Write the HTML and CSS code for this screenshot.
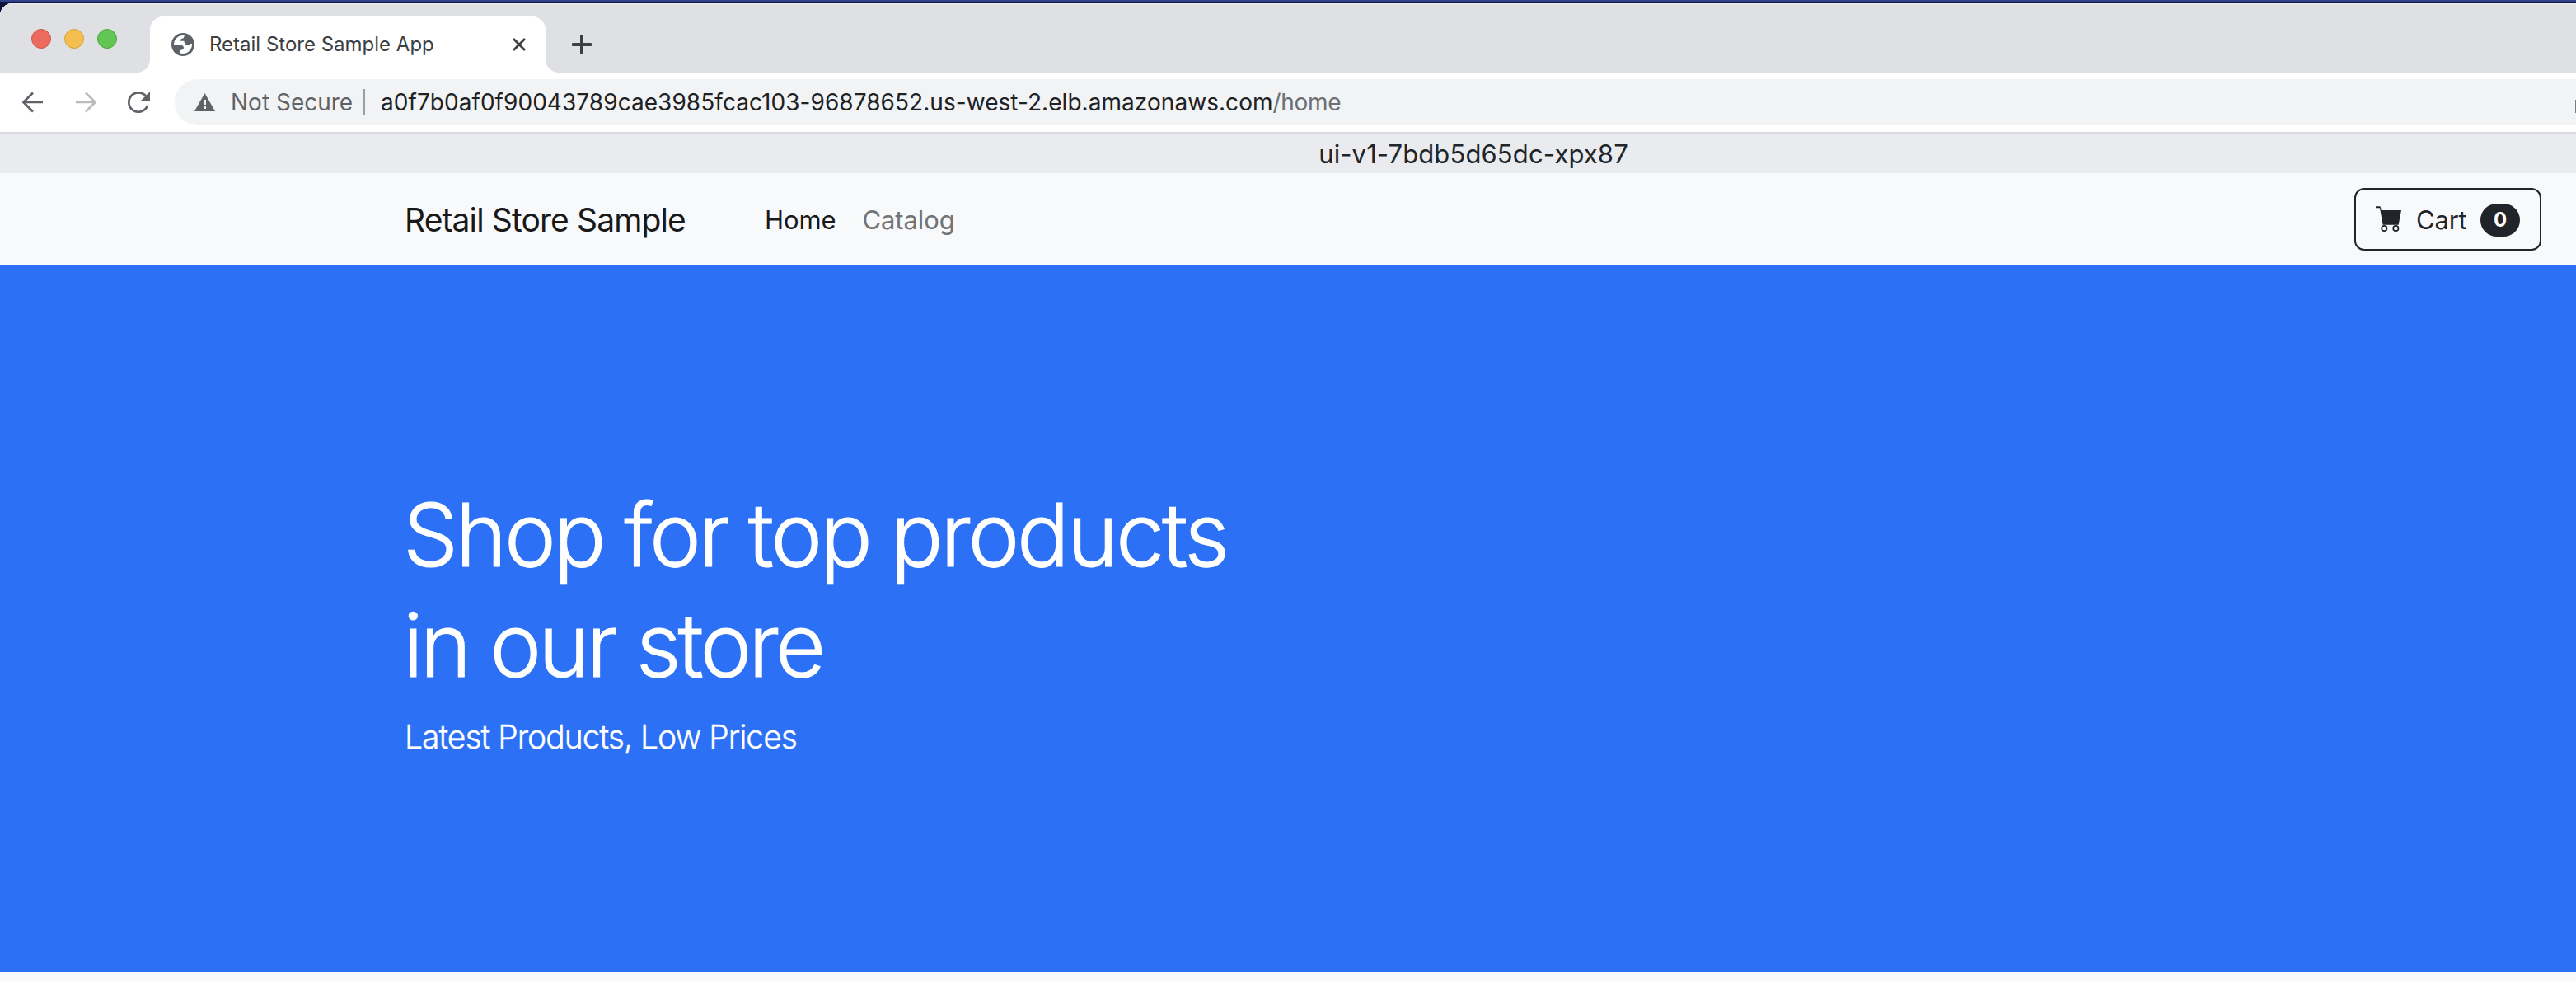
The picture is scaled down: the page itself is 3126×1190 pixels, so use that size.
FILE: index.html
```html
<!DOCTYPE html>
<html lang="en">
<head>
<meta charset="utf-8">
<title>Retail Store Sample App</title>
<link rel="stylesheet" href="styles.css">
</head>
<body>
<div class="window">
  <div class="tabstrip">
    <div class="strip-left">
      <span class="light red"></span>
      <span class="light yellow"></span>
      <span class="light green"></span>
    </div>
    <div class="tab-slot">
      <div class="tab">
        <svg class="globe" viewBox="624 120 84 84">
          <circle cx="666" cy="162" r="37.5" fill="#fff" stroke="#5f6368" stroke-width="9"/>
          <path fill="#5f6368" d="M630 162H650Q668 163 669 173Q669 182 657 182V198L638 192ZM673 127L668 139Q656 141 656 149H670Q672 164 685 164Q692 164 693 159H702V142Z"/>
        </svg>
        <span class="tab-title">Retail Store Sample App</span>
        <svg class="close" viewBox="0 0 16 16"><path d="M1 1L15 15M15 1L1 15"/></svg>
      </div>
    </div>
    <div class="strip-right">
      <svg class="plus" viewBox="0 0 24 24"><path d="M12 1.5V22.5M1.5 12H22.5"/></svg>
    </div>
  </div>

  <div class="toolbar">
    <svg class="nav-icon back" viewBox="0 0 26 26"><path d="M25 13H2M13 1.5L1.5 13L13 24.5"/></svg>
    <svg class="nav-icon forward" viewBox="0 0 26 26"><path d="M1 13H24M13 1.5L24.5 13L13 24.5"/></svg>
    <svg class="nav-icon reload" viewBox="0 0 27 26">
      <path d="M24 17A11.7 11.7 0 1 1 22 5.5"/>
      <path class="solid" d="M27 0V11H16Z"/>
    </svg>
    <div class="address">
      <svg class="warning" viewBox="0 0 25 22">
        <path fill="#5f6368" d="M12.5 0L25 22H0Z"/>
        <path fill="#f1f3f4" d="M11.2 8H14V14H11.2ZM11.2 16H14V19H11.2Z"/>
      </svg>
      <span class="not-secure">Not Secure</span>
      <span class="divider"></span>
      <span class="host">a0f7b0af0f90043789cae3985fcac103-96878652.us-west-2.elb.amazonaws.com</span><span class="path">/home</span>
      <span class="edge-icon"></span>
    </div>
  </div>

  <div class="banner">ui-v1-7bdb5d65dc-xpx87</div>

  <nav class="navbar">
    <span class="brand">Retail Store Sample</span>
    <span class="link active">Home</span>
    <span class="link">Catalog</span>
    <div class="cart">
      <svg class="cart-icon" viewBox="36 45 96 96">
        <path fill="#212529" d="M39 46H53Q56 46 57 50L59 60H132L122 113H65L54 52H39Z"/>
        <circle cx="70" cy="126" r="9.5"/>
        <circle cx="112" cy="126" r="9.5"/>
      </svg>
      <span class="cart-label">Cart</span>
      <span class="badge">0</span>
    </div>
  </nav>

  <section class="hero">
    <h1 class="headline"><span class="line first">Shop for top products</span><span class="line second">in our store</span></h1>
    <p class="sub">Latest Products, Low Prices</p>
  </section>
</div>
</body>
</html>
```
FILE: styles.css
```css
* { box-sizing: border-box; }

body {
  margin: 0;
  padding-top: 4px;
  background: linear-gradient(#31418c 0, #31418c 3px, #0c1238 3px, #0c1238 20px, #f8f9fc 20px);
  font-family: Inter, "Liberation Sans", sans-serif;
  white-space: nowrap;
  overflow: hidden;
}

.window {
  height: 1186px;
  border-radius: 15px 0 0 0;
  overflow: hidden;
  background: #f8f9fb;
}

svg { display: block; flex: none; fill: none; }

/* Tab strip */
.tabstrip { display: flex; height: 84px; background: #fff; }

.strip-left,
.strip-right {
  display: flex;
  background: #dfe0e4;
  border-top: 1px solid #f0f0f2;
}

.strip-left {
  width: 182px;
  padding: 30px 0 0 38px;
  gap: 16px;
  border-bottom-right-radius: 16px;
}

.light { width: 24px; height: 24px; border-radius: 50%; border: 1px solid; }
.red { background: #ed6a5e; border-color: #d15549; }
.yellow { background: #f5bf4f; border-color: #d8a03b; }
.green { background: #62c554; border-color: #4ea73e; }

.tab-slot {
  width: 480px;
  padding-top: 15px;
  background: #dfe0e4;
  border-top: 1px solid #f0f0f2;
}

.tab {
  display: flex;
  align-items: center;
  height: 68px;
  padding: 0 24px 0 26px;
  border-radius: 16px 16px 0 0;
  background: #fff;
}

.globe { width: 28px; height: 28px; }
.tab-title {
  margin-left: 18px;
  padding-bottom: 2px;
  font-size: 24px;
  color: #3c4043;
}
.close {
  width: 16px;
  height: 16px;
  margin-left: auto;
  stroke: #3c4043;
  stroke-width: 2.8;
}

.strip-right { flex: 1; padding: 37px 0 0 32px; border-bottom-left-radius: 16px; }
.plus { width: 24px; height: 24px; stroke: #3c4043; stroke-width: 4; stroke-linecap: round; }

/* Toolbar */
.toolbar {
  display: flex;
  align-items: center;
  height: 74px;
  padding-left: 27px;
  background: #fff;
  border-bottom: 2px solid #dadce0;
}

.nav-icon { height: 26px; stroke: #5f6368; stroke-width: 2.7; }
.back { width: 26px; }
.forward { width: 26px; margin-left: 38px; stroke: #babcbe; }
.reload { width: 27px; margin-left: 38px; }
.solid { fill: #5f6368; stroke: none; }

.address {
  display: flex;
  align-items: center;
  flex: 1;
  height: 56px;
  margin-left: 30px;
  padding-left: 24px;
  border-radius: 28px 0 0 28px;
  background: #f1f3f4;
  font-size: 28px;
}

.warning { width: 25px; height: 22px; }
.not-secure { width: 147px; margin-left: 19px; color: #5f6368; }
.divider { width: 2px; height: 32px; margin: 0 19px 0 14px; background: #9b9ea2; }
.host { color: #202124; letter-spacing: 0.05px; }
.path { color: #6b6e72; letter-spacing: -0.3px; }
.edge-icon { width: 1px; height: 16px; margin: 9px 0 0 auto; background: #7a7c7e; }

/* Pod name banner */
.banner {
  height: 48px;
  padding-left: 450px;
  background: #e9ebef;
  color: #212529;
  font-size: 31px;
  line-height: 49px;
  letter-spacing: 0.11px;
  text-align: center;
}

/* Store navigation */
.navbar {
  display: flex;
  align-items: center;
  height: 112px;
  padding: 0 42px 0 491px;
  background: #f8f9fb;
}

.brand {
  width: 437px;
  padding-top: 1px;
  color: #191919;
  font-size: 39px;
  letter-spacing: -0.88px;
}
.link { margin-right: 32px; padding-top: 1px; font-size: 31px; color: #737475; letter-spacing: -0.1px; }
.active { color: #19191a; }

.cart {
  display: flex;
  align-items: center;
  width: 227px;
  height: 76px;
  margin-left: auto;
  padding-left: 23px;
  border: 2px solid #212529;
  border-radius: 12px;
  color: #212529;
  font-size: 31px;
}
.cart-icon { width: 32px; height: 32px; stroke-width: 5; }
.cart-icon circle { stroke: #212529; }
.cart-label { width: 78px; margin-left: 18px; padding-top: 1px; letter-spacing: -0.2px; }
.badge {
  width: 48px;
  height: 40px;
  margin-top: 2px;
  border-radius: 20px;
  background: #212529;
  color: #fff;
  font-size: 24px;
  font-weight: 700;
  line-height: 40px;
  text-align: center;
}

/* Hero */
.hero {
  height: 857px;
  padding: 260px 0 0 489px;
  background: #2c71f5;
  color: #fff;
  font-weight: 300;
}
.headline {
  margin: 0;
  font-size: 106px;
  font-weight: 300;
  line-height: 134px;
  -webkit-text-stroke: 1px #fff;
}
.line { display: block; }
.first { letter-spacing: -3.2px; word-spacing: -1.5px; }
.second { letter-spacing: -3.9px; }
.sub {
  margin: 14px 0 0 2px;
  font-size: 39px;
  line-height: 60px;
  letter-spacing: -0.98px;
  -webkit-text-stroke: 0.4px #fff;
}
```
